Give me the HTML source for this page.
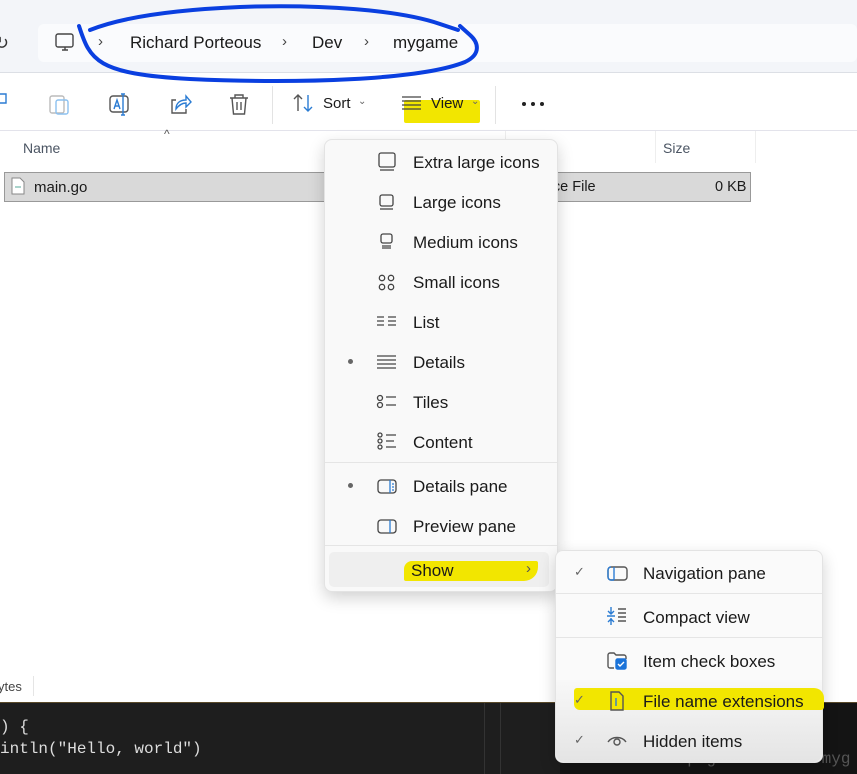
<!DOCTYPE html>
<html><head><meta charset="utf-8"><style>
*{margin:0;padding:0;box-sizing:border-box}
body{width:857px;height:774px;overflow:hidden;background:#fff;font-family:"Segoe UI","Liberation Sans",sans-serif;color:#1a1a1a;position:relative;font-size:15px}
.a{position:absolute}
.t{position:absolute;white-space:nowrap}
.menu{position:absolute;background:#f9f9f9;border:1px solid #e3e3e3;border-radius:8px;box-shadow:0 6px 16px rgba(0,0,0,.18)}
.hl{position:absolute;background:#f2e600;border-radius:6px}
.dot{position:absolute;width:4px;height:4px;border-radius:50%;background:#222}
</style></head><body>
<div class="a" style="left:0;top:0;width:857px;height:72px;background:#f3f5f9"></div>
<div class="a" style="left:38px;top:24px;width:819px;height:38px;background:#fafbfd;border-radius:6px"></div>
<div class="a" style="left:0;top:72px;width:857px;height:1px;background:#dcdfe5"></div>
<div class="t" style="left:-6px;top:33px;font-size:18px;color:#333">↻</div>
<svg class="a" style="left:54px;top:32px" width="22" height="22" viewBox="0 0 22 22" fill="none" stroke="#444" stroke-width="1.4"><rect x="2" y="2" width="17" height="13" rx="2"/><path d="M8 18h6M11 15v3"/></svg>
<div class="t" style="left:98px;top:33px;color:#444">›</div>
<div class="t" style="left:130px;top:33px;font-size:17px">Richard Porteous</div>
<div class="t" style="left:282px;top:33px;color:#444">›</div>
<div class="t" style="left:312px;top:33px;font-size:17px">Dev</div>
<div class="t" style="left:364px;top:33px;color:#444">›</div>
<div class="t" style="left:393px;top:33px;font-size:17px">mygame</div>
<svg class="a" style="left:0;top:90px" width="260" height="30" viewBox="0 0 260 30" fill="none" stroke-width="1.4">
<path d="M-4 4h10v9H-4" stroke="#2b7cd3"/>
<rect x="50" y="6" width="14" height="17" rx="2" stroke="#bbb"/><rect x="56" y="10" width="12" height="14" rx="2" stroke="#8cc0ef"/>
<rect x="110" y="6" width="18" height="16" rx="3" stroke="#555"/><path d="M114 19l3-9 3 9M115 16h4" stroke="#2b7cd3"/><path d="M123 4v21M121 4h4M121 25h4" stroke="#2b7cd3"/>
<path d="M176 10h-4v13h14v-4" stroke="#555"/><path d="M176 19c0-6 4-9 10-9v-4l5 6-5 5v-4c-4 0-7 2-10 6z" stroke="#2b7cd3"/>
<path d="M230 8h18M235 8V5h8v3M232 8l1.5 16h11L246 8M237 12v8M241 12v8" stroke="#555"/>
</svg>
<div class="a" style="left:272px;top:86px;width:1px;height:38px;background:#e3e3e3"></div>
<svg class="a" style="left:292px;top:92px" width="24" height="22" viewBox="0 0 24 22" fill="none" stroke-width="1.4"><path d="M6 19V3M2 7l4-4 4 4" stroke="#555"/><path d="M16 3v16M12 15l4 4 4-4" stroke="#2b7cd3"/></svg>
<div class="t" style="left:323px;top:95px;font-size:15px">Sort</div>
<div class="t" style="left:358px;top:96px;font-size:10px;color:#666">⌄</div>
<div class="hl" style="left:404px;top:100px;width:76px;height:23px;border-radius:2px"></div>
<svg class="a" style="left:401px;top:95px" width="22" height="16" viewBox="0 0 22 16" stroke="#444" stroke-width="1.3"><path d="M1 2h19M1 6h19M1 10h19M1 14h19"/></svg>
<div class="t" style="left:431px;top:95px;font-size:15px">View</div>
<div class="t" style="left:471px;top:96px;font-size:10px;color:#666">⌄</div>
<div class="a" style="left:495px;top:86px;width:1px;height:38px;background:#e3e3e3"></div>
<div class="dot" style="left:522px;top:102px"></div><div class="dot" style="left:531px;top:102px"></div><div class="dot" style="left:540px;top:102px"></div>
<div class="a" style="left:0;top:130px;width:857px;height:1px;background:#e3e3eb"></div>
<div class="t" style="left:164px;top:127px;font-size:12px;color:#555">^</div>
<div class="t" style="left:23px;top:140px;font-size:14px;color:#4b5563">Name</div>
<div class="a" style="left:505px;top:131px;width:1px;height:32px;background:#eee"></div>
<div class="a" style="left:655px;top:131px;width:1px;height:32px;background:#eee"></div>
<div class="a" style="left:755px;top:131px;width:1px;height:32px;background:#eee"></div>
<div class="t" style="left:663px;top:140px;font-size:14px;color:#4b5563">Size</div>
<div class="a" style="left:4px;top:172px;width:747px;height:30px;background:#d9d9d9;border:1px solid #999"></div>
<svg class="a" style="left:11px;top:177px" width="14" height="18" viewBox="0 0 14 18" fill="#fff" stroke="#888"><path d="M1 1h8l4 4v12H1z"/><path d="M4 10h6" stroke="#5a9"/></svg>
<div class="t" style="left:34px;top:179px;font-size:15px">main.go</div>
<div class="t" style="left:540px;top:179px;font-size:14.5px">urce File</div>
<div class="t" style="left:715px;top:179px;font-size:14.5px">0 KB</div>
<div class="t" style="left:-2px;top:679px;font-size:13px;color:#444">ytes</div>
<div class="a" style="left:33px;top:676px;width:1px;height:20px;background:#e5e5e5"></div>
<div class="a" style="left:0;top:702px;width:857px;height:72px;background:#1e1e1e;border-top:1px solid #5a4a2a"></div>
<div class="a" style="left:484px;top:703px;width:1px;height:71px;background:#333"></div>
<div class="a" style="left:500px;top:703px;width:1px;height:71px;background:#333"></div>
<div class="a" style="left:560px;top:703px;width:297px;height:71px;background:#141414"></div>
<div class="t" style="left:0;top:716px;font-family:'Liberation Mono',monospace;font-size:16px;color:#ddd;line-height:22px">) {<br>intln("Hello, world")</div>
<div class="t" style="left:572px;top:750px;font-family:'Liberation Mono',monospace;font-size:16px;color:#555">cr\code\tec\pkg\dev mkdir myg</div>
<div class="menu" style="left:324px;top:139px;width:234px;height:453px"></div>
<svg class="a" style="left:376px;top:150px" width="24" height="400" viewBox="0 0 24 400" fill="none" stroke="#444" stroke-width="1.3">
<rect x="3" y="3" width="16" height="14" rx="2"/><path d="M4 20h14"/>
<rect x="4" y="45" width="13" height="11" rx="2"/><path d="M4 59h13"/>
<rect x="5" y="84" width="11" height="9" rx="2"/><path d="M6 96h9M6 98h9"/>
<circle cx="6" cy="128" r="2.7"/><circle cx="15" cy="128" r="2.7"/><circle cx="6" cy="137" r="2.7"/><circle cx="15" cy="137" r="2.7"/>
<path d="M1 167h7M1 171h7M1 175h7M12 167h8M12 171h8M12 175h8"/>
<path d="M1 206h19M1 210h19M1 214h19M1 218h19"/>
<circle cx="4" cy="248" r="2.5"/><circle cx="4" cy="255" r="2.5"/><path d="M10 247h10M10 255h10"/>
<circle cx="4" cy="285" r="2"/><circle cx="4" cy="291" r="2"/><circle cx="4" cy="297" r="2"/><path d="M10 285h10M10 291h8M10 297h10"/>
<rect x="2" y="330" width="18" height="13" rx="3"/><path d="M14 330v13" stroke="#2b7cd3"/><path d="M16 334h2M16 337h2M16 340h2" stroke="#2b7cd3"/>
<rect x="2" y="370" width="18" height="13" rx="3"/><path d="M14 370v13" stroke="#2b7cd3"/>
</svg>
<div class="t" style="left:413px;top:153px;font-size:17px">Extra large icons</div>
<div class="t" style="left:413px;top:193px;font-size:17px">Large icons</div>
<div class="t" style="left:413px;top:233px;font-size:17px">Medium icons</div>
<div class="t" style="left:413px;top:273px;font-size:17px">Small icons</div>
<div class="t" style="left:413px;top:313px;font-size:17px">List</div>
<div class="a" style="left:348px;top:359px;width:5px;height:5px;border-radius:50%;background:#666"></div>
<div class="t" style="left:413px;top:353px;font-size:17px">Details</div>
<div class="t" style="left:413px;top:393px;font-size:17px">Tiles</div>
<div class="t" style="left:413px;top:433px;font-size:17px">Content</div>
<div class="a" style="left:325px;top:462px;width:232px;height:1px;background:#e5e5e5"></div>
<div class="a" style="left:348px;top:483px;width:5px;height:5px;border-radius:50%;background:#666"></div>
<div class="t" style="left:413px;top:477px;font-size:17px">Details pane</div>
<div class="t" style="left:413px;top:517px;font-size:17px">Preview pane</div>
<div class="a" style="left:325px;top:545px;width:232px;height:1px;background:#e5e5e5"></div>
<div class="a" style="left:329px;top:552px;width:220px;height:35px;background:#efefef;border-radius:5px"></div>
<div class="hl" style="left:404px;top:561px;width:134px;height:20px;border-radius:8px 2px 14px 2px"></div>
<div class="t" style="left:411px;top:561px;font-size:17px">Show</div>
<div class="t" style="left:526px;top:560px;font-size:15px;color:#555">›</div>
<div class="menu" style="left:555px;top:550px;width:268px;height:213px;background:#fafafa"></div>
<div class="a" style="left:556px;top:593px;width:266px;height:1px;background:#e5e5e5"></div>
<div class="a" style="left:556px;top:637px;width:266px;height:1px;background:#e5e5e5"></div>
<div class="a" style="left:556px;top:680px;width:266px;height:82px;background:linear-gradient(#f8f8f8,#e4e4e4);border-radius:0 0 8px 8px"></div>
<div class="hl" style="left:574px;top:688px;width:250px;height:22px;border-radius:3px 10px 3px 6px"></div>
<div class="t" style="left:574px;top:564px;font-size:13px;color:#666">✓</div>
<div class="t" style="left:574px;top:692px;font-size:13px;color:#666">✓</div>
<div class="t" style="left:574px;top:732px;font-size:13px;color:#666">✓</div>
<svg class="a" style="left:606px;top:560px" width="26" height="200" viewBox="0 0 26 200" fill="none" stroke-width="1.4">
<rect x="2" y="7" width="19" height="13" rx="3" stroke="#555"/><path d="M8 7v13" stroke="#2b7cd3"/><path d="M5 7a3 3 0 0 0-3 3v7a3 3 0 0 0 3 3h3" stroke="#2b7cd3"/>
<path d="M5 47v7M2 51l3 3 3-3M5 65v-7M2 62l3-3 3 3M1 56h8" stroke="#2b7cd3"/><path d="M12 49h8M12 53h8M12 57h8M12 61h8" stroke="#555"/>
<path d="M2 106V95a2 2 0 0 1 2-2h4l2 2h8a2 2 0 0 1 2 2v2M2 106a2 2 0 0 0 2 2h4" stroke="#555"/><rect x="10" y="99" width="10" height="10" rx="1.5" fill="#1a73d9" stroke="#1a73d9"/><path d="M12 104l2 2 4-4" stroke="#fff"/>
<path d="M5 132h8l4 4v14H5z" stroke="#555"/><path d="M10 138v8" stroke="#2b7cd3"/>
<path d="M2 182c4-6 14-6 18 0" stroke="#555"/><circle cx="11" cy="182" r="3" stroke="#555"/>
</svg>
<div class="t" style="left:643px;top:564px;font-size:17px">Navigation pane</div>
<div class="t" style="left:643px;top:608px;font-size:17px">Compact view</div>
<div class="t" style="left:643px;top:652px;font-size:17px">Item check boxes</div>
<div class="t" style="left:643px;top:692px;font-size:17px">File name extensions</div>
<div class="t" style="left:643px;top:732px;font-size:17px">Hidden items</div>
<svg class="a" style="left:0;top:0" width="857" height="120" viewBox="0 0 857 120" fill="none" stroke="#0a3fe0" stroke-width="4" stroke-linecap="round">
<path d="M79 26C90 60 96 74 190 79C300 84 420 80 465 62C482 54 478 42 470 35L460 26"/>
<path d="M90 30C120 18 170 10 240 7C320 4 400 10 440 24L458 30"/>
</svg>
</body></html>
